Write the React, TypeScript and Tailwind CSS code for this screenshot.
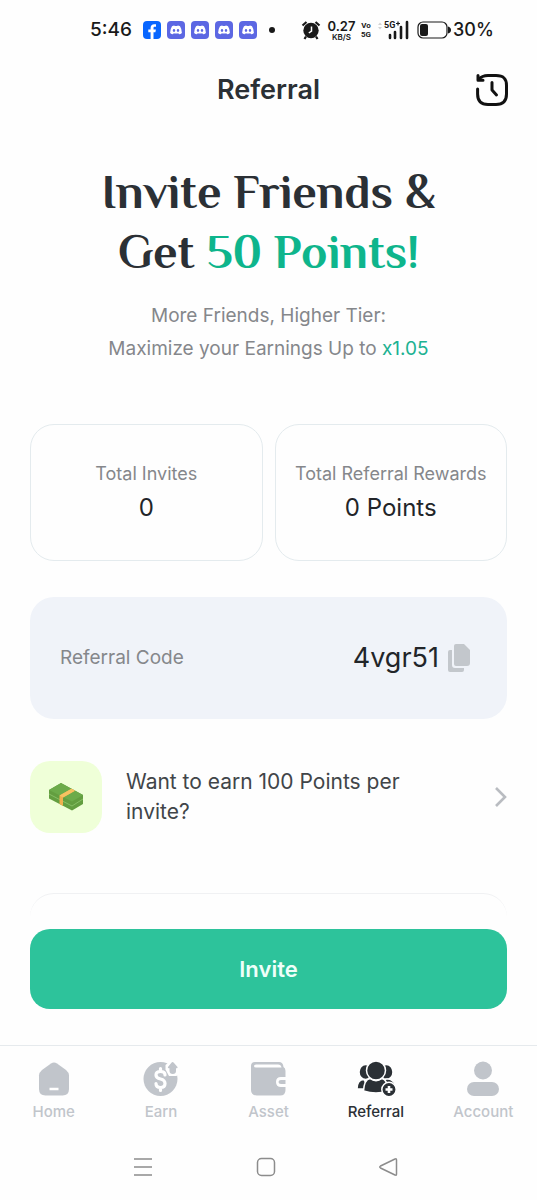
import type { ReactNode } from 'react';

const DiscordIcon = () => (
    <svg viewBox="0 0 18 18" className="h-[18px] w-[18px]" aria-hidden="true">
        <rect width="18" height="18" rx="4" fill="#5c67e3" />
        <path d="M5 5.2Q6.2 4.5 7.3 4.4L7.7 5.1H10.3L10.7 4.4Q12 4.5 13 5.2Q15 8.3 14.9 11.9Q13.6 13 12 13.3L11.3 12.2Q9 12.8 6.7 12.2L6 13.3Q4.4 13 3.1 11.9Q3 8.3 5 5.2Z" fill="#fff" />
        <ellipse cx="7" cy="9.5" rx="1.2" ry="1.4" fill="#5c67e3" />
        <ellipse cx="11" cy="9.5" rx="1.2" ry="1.4" fill="#5c67e3" />
    </svg>
);

const StatusBar = () => (
    <div className="flex h-15 items-center pl-[90px] text-[#191919]">
        <span className="w-[53px] text-[19px] font-medium">5:46</span>
        <div className="flex items-center gap-[6px]">
            <svg viewBox="0 0 18 18" className="h-[18px] w-[18px]" aria-hidden="true">
                <rect width="18" height="18" rx="4" fill="#0866ff" />
                <path d="M7.6 18V11.3H5.3V8.6H7.6V7.1C7.6 4.5 8.9 3.2 11.3 3.2H13V5.7H11.8C10.8 5.7 10.5 6.2 10.5 7.1V8.6H12.9L12.4 11.3H10.5V18Z" fill="#fff" />
            </svg>
            <DiscordIcon />
            <DiscordIcon />
            <DiscordIcon />
            <DiscordIcon />
        </div>
        <span className="ml-3 h-[6px] w-[6px] rounded-full bg-[#191919]" />
        <svg viewBox="0 0 20 20" className="ml-[26px] h-5 w-5" aria-hidden="true">
            <circle cx="10" cy="10.5" r="7.7" fill="currentColor" />
            <path d="M1.5 5.5L5.5 2M18.5 5.5L14.5 2M5 16.5L3.5 19M15 16.5L16.5 19" stroke="currentColor" strokeWidth="2.2" />
            <path d="M10.5 6.500V11L7.8 13" fill="none" stroke="#fff" strokeWidth="1.5" />
        </svg>
        <div className="ml-[6px] flex w-[29px] flex-col items-center">
            <span className="text-[13px] leading-[13px] font-semibold">0.27</span>
            <span className="text-[8px] leading-[8px] font-semibold">KB/S</span>
        </div>
        <div className="ml-[5px] flex w-[10px] flex-col items-center font-['Roboto'] text-[8px] leading-[9px] font-bold">
            <span>Vo</span>
            <span>5G</span>
        </div>
        <svg viewBox="0 0 31 22" className="ml-[7px] h-[22px] w-[31px]" aria-hidden="true">
            <path d="M0 6L2 3.500L4 6ZM0 8L2 10.500L4 8Z" fill="#d3d3d3" />
            <text x="6" y="9" fontSize="9" fontWeight="700" fontFamily="Roboto" fill="currentColor">5G</text>
            <path d="M18 4.500H22M20 2.500V6.500" stroke="currentColor" strokeWidth="1.200" />
            <path d="M12 19V16M17 19V13M23 19V8M29 19V3" stroke="currentColor" strokeWidth="2.600" strokeLinecap="round" />
        </svg>
        <svg viewBox="0 0 34 18" className="ml-2 h-[18px] w-[34px]" aria-hidden="true">
            <rect x="1" y="1" width="29" height="16" rx="5" fill="none" stroke="currentColor" strokeWidth="1.200" />
            <rect x="3" y="3" width="8" height="12" rx="2" fill="currentColor" />
            <path d="M31 5.500Q34 6.500 34 9T31 12.500Z" fill="currentColor" />
        </svg>
        <span className="ml-[2px] text-lg font-medium">30%</span>
    </div>
);

const HistoryIcon = () => (
    <svg viewBox="0 0 36 36" className="h-9 w-9" fill="none" stroke="#111" strokeWidth="3" strokeLinecap="round" strokeLinejoin="round" aria-hidden="true">
        <path d="M3.6 17V22C3.6 29 7 32.5 14 32.5H22C29.5 32.5 32.5 29 32.5 22V13.5C32.5 6.5 29.5 3.5 22 3.5H14Q8 3.5 4.5 7.5" />
        <path d="M4 3.500V8.300H9" />
        <path d="M18 10.500V18L22.500 23" />
    </svg>
);

const MoneyIcon = () => (
    <svg viewBox="0 0 36 30" className="h-[30px] w-9" aria-hidden="true">
        <path d="M1 12L13 5L35 17V22L24 28.500L1 16.500Z" fill="#639e40" />
        <path d="M1 8L13 1L35 13V17L24 24L1 12Z" fill="#639e40" />
        <path d="M1 8L13 1L35 13L24 19.500Z" fill="#6cab4a" />
        <path d="M1 12L24 24L35 17" fill="none" stroke="#8fc76d" strokeWidth="0.800" />
        <path d="M11.500 13.500L23.500 6.700L27 8.700L15 15.500V24L11.500 22Z" fill="#efb04f" />
        <path d="M11.500 13.500L23.500 6.700L27 8.700L15 15.500Z" fill="#f7c262" />
    </svg>
);

const HomeIcon = () => (
    <svg viewBox="0 0 36 36" className="h-9 w-9" aria-hidden="true">
        <path d="M15 2.500Q18 0.500 21 2.500L30 9Q33 11.500 33 14.500V28Q33 34.500 26.500 34.500H9.500Q3 34.500 3 28V14.500Q3 11.500 6 9Z" fill="#c1c5cb" />
        <path d="M13.500 28H22.500" stroke="#fff" strokeWidth="2.500" />
    </svg>
);

const EarnIcon = () => (
    <svg viewBox="0 0 36 36" className="h-9 w-9" aria-hidden="true">
        <circle cx="17.500" cy="18" r="17" fill="#c1c5cb" />
        <path d="M29.500 -2L38 5V10L33.500 15H26L22.500 8.500V4Z" fill="#fff" />
        <path d="M29.500 1Q30.200 1 31 2L34.500 6Q35 7.200 33.500 7.200H33V10Q33 13 29.800 13T26.500 10V7.200H26Q24.300 7.200 25 6L28.200 2Q29 1 29.500 1Z" fill="#c1c5cb" />
        <path d="M22 14Q22 10.500 17.500 10.500T13 14Q13 17 17.500 18T22 22.500Q22 26.500 17.500 26.500T13 22.500M17.500 7.500V10M17.500 27V29.500" fill="none" stroke="#fff" strokeWidth="3.200" strokeLinecap="round" />
    </svg>
);

const AssetIcon = () => (
    <svg viewBox="0 0 36 36" className="h-9 w-9" aria-hidden="true">
        <path d="M5 1H29Q33 1 33.500 6Q35.500 7 35.500 10V16H31Q26 16 26 21T31 26H35.500V29Q35.500 34.500 30 34.500H7Q1 34.500 1 29V5Q1 1 5 1Z" fill="#c1c5cb" />
        <path d="M6 3.500H28Q31 3.500 31.500 6.500H6Q4 6.500 4 5T6 3.500Z" fill="#fff" />
        <path d="M31 19H35.500V23H31Q28.500 23 28.500 21T31 19Z" fill="#c1c5cb" />
    </svg>
);

const ReferralIcon = () => (
    <svg viewBox="0 0 40 36" className="h-9 w-10" aria-hidden="true">
        <g fill="#2b3035" stroke="#fff" strokeWidth="1.500">
            <ellipse cx="9.500" cy="11" rx="6.500" ry="7.500" />
            <ellipse cx="30.500" cy="11" rx="6.500" ry="7.500" />
            <path d="M1 28C1 22 4 18.500 8 18.500L13 28H7Z" />
            <path d="M39 24C38 20 35 17.500 30 18L26 24Z" />
            <path d="M7.500 30C8 22 11 18 14 17.500Q20 22 26 17.500C29 18 32 22 32 30Q26 32 20 32T7.500 30Z" />
            <circle cx="20" cy="9.500" r="9.500" />
            <circle cx="33" cy="28.500" r="7.200" />
        </g>
        <path d="M33 25V32M29.500 28.500H36.500" stroke="#fff" strokeWidth="2.600" />
    </svg>
);

const AccountIcon = () => (
    <svg viewBox="0 0 36 36" className="h-9 w-9" fill="#c1c5cb" aria-hidden="true">
        <circle cx="18" cy="9.500" r="9" />
        <rect x="2" y="21" width="32" height="14" rx="7" />
    </svg>
);

interface StatCardProps {
    label: string;
    value: string;
}

const StatCard = ({ label, value }: StatCardProps) => (
    <div className="flex h-[137px] flex-col items-center justify-center rounded-3xl border border-[#e4ebee] whitespace-nowrap">
        <p className="text-lg leading-[30px] text-[#85878b]">{label}</p>
        <p className="text-2xl leading-[38px] text-[#222529]">{value}</p>
    </div>
);

interface TabProps {
    label: string;
    icon: ReactNode;
    active?: boolean;
}

const Tab = ({ label, icon, active }: TabProps) => (
    <a
        href="#"
        aria-current={active ? 'page' : undefined}
        className={`flex flex-col items-center gap-[3px] text-[15px] leading-6 font-medium ${active ? 'text-[#2b3035]' : 'text-[#c1c5cb]'}`}
    >
        {icon}
        {label}
    </a>
);

export default function App() {
    return (
        <div className="flex min-h-screen flex-col bg-[#fefefe] font-['Inter',sans-serif]">
            <StatusBar />
            <header className="grid h-15 grid-cols-[1fr_auto_1fr] items-center px-[27px]">
                <h2 className="col-start-2 text-[27px] font-semibold text-[#2b3035]">Referral</h2>
                <button type="button" aria-label="History" className="cursor-pointer justify-self-end">
                    <HistoryIcon />
                </button>
            </header>

            <main className="flex flex-1 flex-col px-[30px] pt-[42px]">
                <h1 className="text-center font-['Philosopher','Liberation_Serif',serif] text-5xl leading-[60px] font-bold text-[#2b3035]">
                    Invite Friends &amp;
                    <br />
                    Get <span className="text-[#0eb58c]">50 Points!</span>
                </h1>
                <p className="mt-[17px] text-center text-[19px] leading-[33px] text-[#85878b]">
                    More Friends, Higher Tier:
                    <br />
                    Maximize your Earnings Up to <span className="text-[#20b292]">x1.05</span>
                </p>

                <section className="mt-[59px] grid grid-cols-2 gap-3">
                    <StatCard label="Total Invites" value="0" />
                    <StatCard label="Total Referral Rewards" value="0 Points" />
                </section>

                <section className="mt-9 flex h-[122px] items-center justify-between rounded-3xl bg-[#f0f3f9] pr-9 pl-[30px]">
                    <span className="text-[19px] text-[#85878b]">Referral Code</span>
                    <div className="flex items-center gap-2">
                        <span className="text-[27px] text-[#222529]">4vgr51</span>
                        <button type="button" aria-label="Copy code" className="cursor-pointer">
                            <svg viewBox="0 0 24 30" className="h-[30px] w-6" fill="#c3c7cc" aria-hidden="true">
                                <path d="M9 1H17L23 7V20Q23 23 20 23H9Q7 23 7 21V3Q7 1 9 1Z" />
                                <path d="M3 7H5V22Q5 25 8 25H17V27Q17 29 15 29H3Q1 29 1 27V9Q1 7 3 7Z" />
                            </svg>
                        </button>
                    </div>
                </section>

                <a href="#" className="mt-[42px] flex items-center">
                    <span className="flex h-[72px] w-[72px] shrink-0 items-center justify-center rounded-[20px] bg-[#efffd8]">
                        <MoneyIcon />
                    </span>
                    <span className="ml-6 max-w-[300px] flex-1 text-[21px] leading-[30px] text-[#414549]">
                        Want to earn 100 Points per invite?
                    </span>
                    <svg viewBox="0 0 14 22" className="ml-auto h-[22px] w-[14px]" fill="none" stroke="#b9bcc1" strokeWidth="2.600" aria-hidden="true">
                        <path d="M3 2L12 11L3 20" />
                    </svg>
                </a>

                <div className="mt-[60px] h-9 rounded-t-3xl border-t border-[#f0f1f3]" />
                <button type="button" className="h-20 cursor-pointer rounded-[20px] bg-[#2dc39b] text-[22px] font-semibold text-[#effff9]">
                    Invite
                </button>
            </main>

            <nav className="mt-9 grid grid-cols-5 border-t border-[#e6eaed] pt-[15px]">
                <Tab label="Home" icon={<HomeIcon />} />
                <Tab label="Earn" icon={<EarnIcon />} />
                <Tab label="Asset" icon={<AssetIcon />} />
                <Tab label="Referral" icon={<ReferralIcon />} active />
                <Tab label="Account" icon={<AccountIcon />} />
            </nav>

            <div className="mt-[33px] mb-[23px] flex items-center justify-between pr-[139px] pl-[133px]">
                <button type="button" aria-label="Recent apps">
                    <svg viewBox="0 0 20 20" className="h-5 w-5" stroke="#8c8c8c" strokeWidth="1.500" aria-hidden="true">
                        <path d="M1 2H19M1 10H19M1 18H19" />
                    </svg>
                </button>
                <button type="button" aria-label="Home screen">
                    <svg viewBox="0 0 20 20" className="h-5 w-5" fill="none" stroke="#8c8c8c" strokeWidth="1.500" aria-hidden="true">
                        <rect x="1.500" y="1.500" width="17" height="17" rx="4" />
                    </svg>
                </button>
                <button type="button" aria-label="Back">
                    <svg viewBox="0 0 20 20" className="h-5 w-5" fill="none" stroke="#8c8c8c" strokeWidth="1.500" strokeLinejoin="round" aria-hidden="true">
                        <path d="M17 2Q18.500 1 18.500 3V17Q18.500 19 17 18L2.500 11Q1 10 2.500 9Z" />
                    </svg>
                </button>
            </div>
        </div>
    );
}
